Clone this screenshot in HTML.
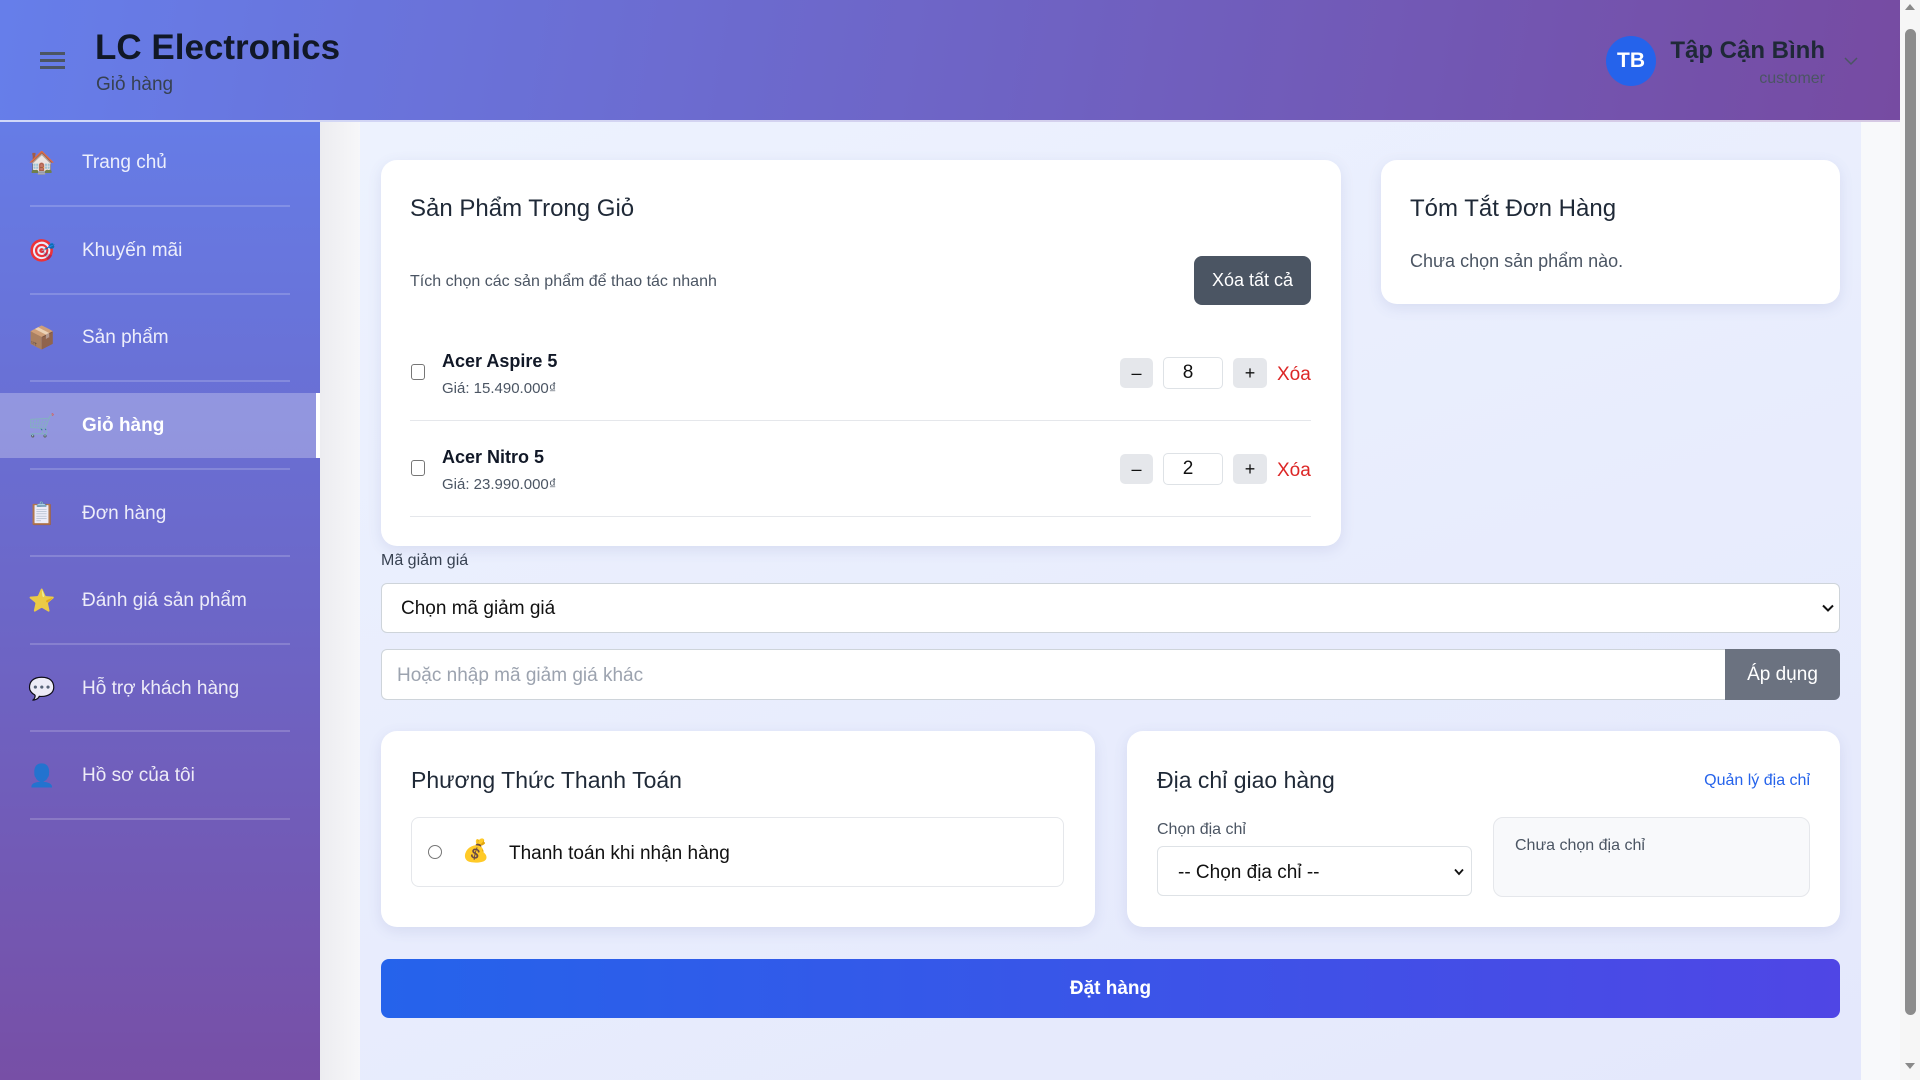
<!DOCTYPE html>
<html><head><meta charset="utf-8">
<style>
*{box-sizing:border-box;margin:0;padding:0}
body{width:1920px;height:1080px;overflow:hidden;font-family:"Liberation Sans","DejaVu Sans",sans-serif;background:#f3f4f6;position:relative}
.abs{position:absolute}
.header{left:0;top:0;width:1900px;height:122px;background:linear-gradient(100deg,#667eea 0%,#764ba2 100%);border-bottom:2px solid rgba(255,255,255,.7);z-index:2}
.side{left:0;top:122px;width:320px;height:958px;background:linear-gradient(180deg,#667ce6 0%,#6c67c8 50%,#774fa6 100%)}
.item{position:absolute;left:0;width:320px;height:64px;color:rgba(255,255,255,.88);font-size:19px;display:flex;align-items:center}
.item .ic{position:absolute;left:28px;font-size:22px;width:26px;text-align:center}
.item .tx{position:absolute;left:82px}
.div{position:absolute;left:30px;width:260px;height:2px;background:rgba(255,255,255,.18)}
.main{left:360px;top:120px;width:1501px;height:960px;background:linear-gradient(160deg,#edf2fe 0%,#e4e8fc 100%)}
.gap{left:320px;top:120px;width:40px;height:960px;background:linear-gradient(90deg,#ececf0,#f7f7f9)}
.rgap{left:1861px;top:120px;width:39px;height:960px;background:#f8f9fb}
.sb{left:1900px;top:0;width:20px;height:1080px;background:#f6f6f6}
.card{position:absolute;background:#fff;border-radius:16px;box-shadow:0 4px 14px rgba(80,90,160,.12)}
.h2{position:absolute;font-size:24px;color:#1f2937;font-weight:500}
.btn{position:absolute;background:#e5e7eb;border-radius:5px;font-size:18px;color:#111;display:flex;align-items:center;justify-content:center}
.qin{position:absolute;border:1px solid #dee2e6;border-radius:5px;background:#fff;font-size:19px;display:flex;align-items:center;justify-content:center;padding-right:10px;color:#111}
.chk{position:absolute;width:14px;height:16px;border:1.5px solid #767676;border-radius:3px;background:#fff}
.xoa{position:absolute;color:#dc2626;font-size:19px}
.pname{position:absolute;font-size:18px;font-weight:bold;color:#111827}
.price{position:absolute;font-size:15px;color:#4b5563}
.hr{position:absolute;height:1px;background:#e5e7eb}
</style></head><body>
<div class="abs header">
  <div class="abs" style="left:40px;top:52px;width:25px;height:3px;background:#4b5563"></div>
  <div class="abs" style="left:40px;top:59px;width:25px;height:3px;background:#4b5563"></div>
  <div class="abs" style="left:40px;top:66px;width:25px;height:3px;background:#4b5563"></div>
  <div class="abs" style="left:95px;top:28px;font-size:35px;font-weight:bold;color:#111827">LC Electronics</div>
  <div class="abs" style="left:96px;top:74px;font-size:19px;color:#374151">Giỏ hàng</div>
  <div class="abs" style="left:1606px;top:36px;width:50px;height:50px;border-radius:50%;background:#2563eb;color:#fff;font-weight:bold;font-size:21px;display:flex;align-items:center;justify-content:center">TB</div>
  <div class="abs" style="right:75px;top:37px;font-size:24px;font-weight:bold;color:#1f2937">Tập Cận Bình</div>
  <div class="abs" style="right:75px;top:70px;font-size:16px;color:#4b5563">customer</div>
  <svg class="abs" style="left:1844px;top:56px" width="14" height="10"><path d="M1 2 L7 8 L13 2" stroke="#4b5563" stroke-width="1.5" fill="none"/></svg>
</div>
<div class="abs side">
  <div class="item" style="top:9px"><span class="ic">🏠</span><span class="tx">Trang chủ</span></div>
  <div class="div" style="top:83px"></div>
  <div class="item" style="top:97px"><span class="ic">🎯</span><span class="tx">Khuyến mãi</span></div>
  <div class="div" style="top:171px"></div>
  <div class="item" style="top:184px"><span class="ic">📦</span><span class="tx">Sản phẩm</span></div>
  <div class="div" style="top:258px"></div>
  <div class="item" style="top:271px;height:65px;background:rgba(255,255,255,.27);color:#fff;font-weight:bold;border-right:4px solid #fff"><span class="ic">🛒</span><span class="tx">Giỏ hàng</span></div>
  <div class="div" style="top:346px"></div>
  <div class="item" style="top:360px"><span class="ic">📋</span><span class="tx">Đơn hàng</span></div>
  <div class="div" style="top:433px"></div>
  <div class="item" style="top:447px"><span class="ic">⭐</span><span class="tx">Đánh giá sản phẩm</span></div>
  <div class="div" style="top:521px"></div>
  <div class="item" style="top:535px"><span class="ic">💬</span><span class="tx">Hỗ trợ khách hàng</span></div>
  <div class="div" style="top:608px"></div>
  <div class="item" style="top:622px"><span class="ic">👤</span><span class="tx">Hồ sơ của tôi</span></div>
  <div class="div" style="top:696px"></div>
</div>
<div class="abs gap"></div>
<div class="abs main"></div>
<div class="abs rgap"></div>
<div class="abs sb">
  <div class="abs" style="left:5px;top:4px;width:0;height:0;border-left:5px solid transparent;border-right:5px solid transparent;border-bottom:6px solid #8a8a8a"></div>
  <div class="abs" style="left:5px;top:29px;width:11px;height:986px;border-radius:6px;background:#8c8c8c"></div>
  <div class="abs" style="left:5px;top:1063px;width:0;height:0;border-left:5px solid transparent;border-right:5px solid transparent;border-top:6px solid #8a8a8a"></div>
</div>

<div class="card" style="left:381px;top:160px;width:960px;height:386px">
  <div class="h2" style="left:29px;top:35px">Sản Phẩm Trong Giỏ</div>
  <div class="abs" style="left:29px;top:113px;font-size:16px;color:#4b5563">Tích chọn các sản phẩm để thao tác nhanh</div>
  <div class="abs" style="left:813px;top:96px;width:117px;height:49px;background:#4b5563;border-radius:8px;color:#fff;font-size:18px;display:flex;align-items:center;justify-content:center">Xóa tất cả</div>
  <div class="chk" style="left:30px;top:204px"></div>
  <div class="pname" style="left:61px;top:191px">Acer Aspire 5</div>
  <div class="price" style="left:61px;top:220px">Giá: 15.490.000₫</div>
  <div class="btn" style="left:739px;top:198px;width:33px;height:30px">–</div>
  <div class="qin" style="left:782px;top:197px;width:60px;height:32px">8</div>
  <div class="btn" style="left:852px;top:198px;width:34px;height:30px">+</div>
  <div class="xoa" style="left:896px;top:204px">Xóa</div>
  <div class="hr" style="left:29px;top:260px;width:901px"></div>
  <div class="chk" style="left:30px;top:300px"></div>
  <div class="pname" style="left:61px;top:287px">Acer Nitro 5</div>
  <div class="price" style="left:61px;top:316px">Giá: 23.990.000₫</div>
  <div class="btn" style="left:739px;top:294px;width:33px;height:30px">–</div>
  <div class="qin" style="left:782px;top:293px;width:60px;height:32px">2</div>
  <div class="btn" style="left:852px;top:294px;width:34px;height:30px">+</div>
  <div class="xoa" style="left:896px;top:300px">Xóa</div>
  <div class="hr" style="left:29px;top:356px;width:901px"></div>
</div>

<div class="card" style="left:1381px;top:160px;width:459px;height:144px">
  <div class="h2" style="left:29px;top:35px">Tóm Tắt Đơn Hàng</div>
  <div class="abs" style="left:29px;top:91px;font-size:18px;color:#4b5563">Chưa chọn sản phẩm nào.</div>
</div>

<div class="abs" style="left:381px;top:552px;font-size:16px;color:#374151;font-weight:500">Mã giảm giá</div>
<div class="abs" style="left:381px;top:583px;width:1459px;height:50px;background:#fff;border:1px solid #ced4da;border-radius:6px">
  <div class="abs" style="left:19px;top:14px;font-size:19px;color:#111">Chọn mã giảm giá</div>
  <svg class="abs" style="left:1440px;top:20px" width="12" height="9"><path d="M1 1.5 L6 6.5 L11 1.5" stroke="#111" stroke-width="2" fill="none"/></svg>
</div>
<div class="abs" style="left:381px;top:649px;width:1345px;height:51px;background:#fff;border:1px solid #ced4da;border-radius:6px 0 0 6px">
  <div class="abs" style="left:15px;top:15px;font-size:19px;color:#9ca3af">Hoặc nhập mã giảm giá khác</div>
</div>
<div class="abs" style="left:1725px;top:649px;width:115px;height:51px;background:#6b7280;border-radius:0 6px 6px 0;color:#fff;font-size:19px;display:flex;align-items:center;justify-content:center">Áp dụng</div>

<div class="card" style="left:381px;top:731px;width:714px;height:196px">
  <div class="h2" style="left:30px;top:36px;font-size:23px">Phương Thức Thanh Toán</div>
  <div class="abs" style="left:30px;top:86px;width:653px;height:70px;border:1px solid #e5e7eb;border-radius:8px">
    <div class="abs" style="left:16px;top:27px;width:14px;height:14px;border:1.5px solid #767676;border-radius:50%"></div>
    <div class="abs" style="left:50px;top:20px;font-size:22px">💰</div>
    <div class="abs" style="left:97px;top:25px;font-size:19px;color:#111">Thanh toán khi nhận hàng</div>
  </div>
</div>

<div class="card" style="left:1127px;top:731px;width:713px;height:196px">
  <div class="h2" style="left:30px;top:36px;font-size:23px">Địa chỉ giao hàng</div>
  <div class="abs" style="right:30px;top:41px;font-size:16px;color:#2563eb">Quản lý địa chỉ</div>
  <div class="abs" style="left:30px;top:90px;font-size:16px;color:#4b5563">Chọn địa chỉ</div>
  <div class="abs" style="left:30px;top:115px;width:315px;height:50px;border:1px solid #dee2e6;border-radius:6px">
    <div class="abs" style="left:20px;top:15px;font-size:19px;color:#111">-- Chọn địa chỉ --</div>
    <svg class="abs" style="left:296px;top:21px" width="10" height="8"><path d="M1 1.5 L5 6 L9 1.5" stroke="#111" stroke-width="1.8" fill="none"/></svg>
  </div>
  <div class="abs" style="left:366px;top:86px;width:317px;height:80px;background:#f8f9fb;border:1px solid #e5e7eb;border-radius:10px">
    <div class="abs" style="left:21px;top:19px;font-size:16px;color:#4b5563">Chưa chọn địa chỉ</div>
  </div>
</div>

<div class="abs" style="left:381px;top:959px;width:1459px;height:59px;border-radius:8px;background:linear-gradient(90deg,#2563eb,#4f46e5);color:#fff;font-weight:bold;font-size:19px;display:flex;align-items:center;justify-content:center">Đặt hàng</div>
</body></html>
